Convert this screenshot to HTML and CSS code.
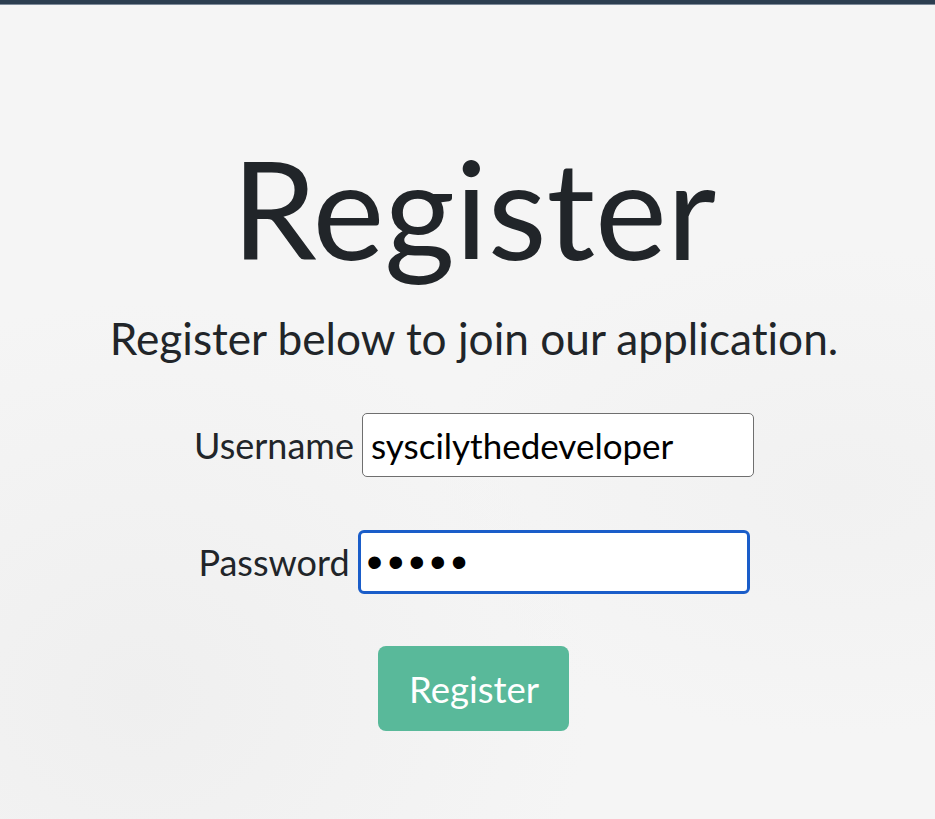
FILE: index.html
```html
<!DOCTYPE html>
<html lang="en">
<head>
<meta charset="utf-8">
<title>Register</title>
<link rel="stylesheet" href="styles.css">
</head>
<body>
<div class="topbar"></div>
<main class="page">
  <h1 class="title">Register</h1>
  <p class="lead">Register below to join our application.</p>
  <form class="form">
    <div class="row">
      <label class="label" for="username">Username</label>
      <input class="field" id="username" type="text" value="syscilythedeveloper">
    </div>
    <div class="row">
      <label class="label" for="password">Password</label>
      <input class="field field-focus" id="password" type="password" value="12345">
    </div>
    <button class="btn" type="button">Register</button>
  </form>
</main>
</body>
</html>
```

FILE: styles.css
```css
html, body {
  margin: 0;
  padding: 0;
  height: 100%;
}
body {
  background: #f5f5f5;
  background-image: radial-gradient(ellipse at 15% 85%, #efefef 0%, rgba(239,239,239,0) 40%),
                    radial-gradient(ellipse at 90% 60%, #f1f1f1 0%, rgba(241,241,241,0) 35%);
  font-family: Lato, "Open Sans", sans-serif;
  font-variant-ligatures: none;
  color: #212529;
  overflow: hidden;
}
.topbar {
  height: 4px;
  background: #2c3e50;
  border-bottom: 1px solid #7d8a99;
}
.page {
  display: flex;
  flex-direction: column;
  align-items: center;
  padding-left: 13px;
  padding-top: 121px;
}
.title {
  font-size: 136px;
  font-weight: 400;
  line-height: 1.2;
  margin: 0;
}
.lead {
  font-size: 44.2px;
  line-height: 1.2;
  margin: 22px 0 0;
}
.form {
  display: flex;
  flex-direction: column;
  align-items: center;
  margin-top: 49px;
}
.row {
  display: flex;
  align-items: center;
  gap: 8px;
  margin-bottom: 53px;
}
.row + .row {
  margin-bottom: 52px;
}
.label {
  font-size: 36px;
}
.field {
  box-sizing: border-box;
  width: 392px;
  height: 64px;
  border: 1.5px solid #6f6f6f;
  border-radius: 5px;
  background: #fff;
  font-family: Lato, sans-serif;
  font-variant-ligatures: none;
  font-size: 35px;
  color: #000;
  padding: 0 8px;
  outline: none;
}
.field-focus {
  border: 3px solid #1a5dc9;
  border-radius: 6px;
  padding: 0 6px;
  font-family: "Liberation Sans", Arial, sans-serif;
  font-size: 46px;
  letter-spacing: 5px;
}
.btn {
  width: 191px;
  height: 85px;
  border: none;
  border-radius: 8px;
  background: #59b99a;
  color: #fff;
  font-family: Lato, sans-serif;
  font-size: 36.5px;
  cursor: pointer;
}
```
